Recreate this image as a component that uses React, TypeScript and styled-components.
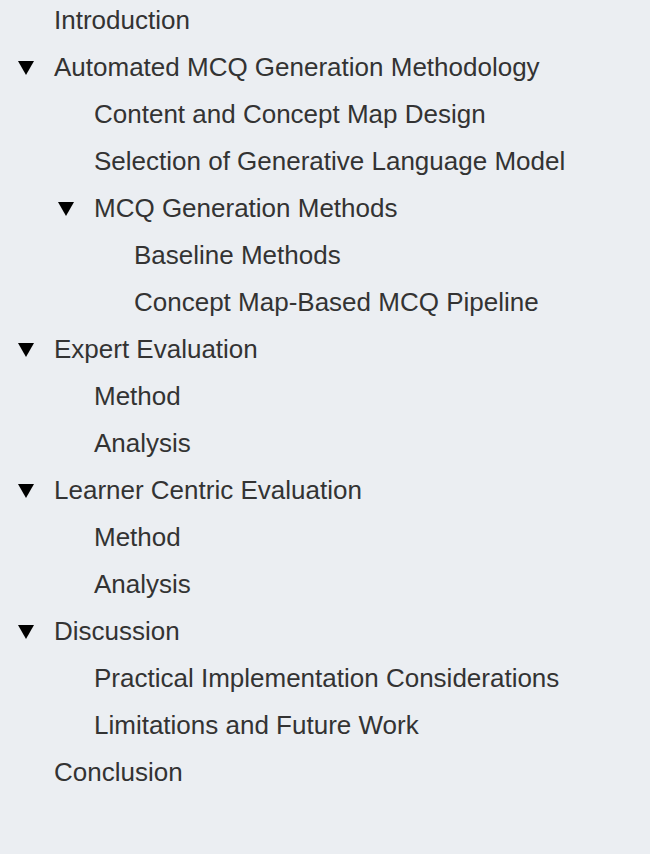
import React from "react";
import styled, { createGlobalStyle } from "styled-components";

const Global = createGlobalStyle`
  html, body { margin: 0; padding: 0; background: #ebeef2; }
  body { font-family: "Liberation Sans", Arial, sans-serif; }
`;

type Node = { title: string; children?: Node[] };

const toc: Node[] = [
  { title: "Introduction" },
  {
    title: "Automated MCQ Generation Methodology",
    children: [
      { title: "Content and Concept Map Design" },
      { title: "Selection of Generative Language Model" },
      {
        title: "MCQ Generation Methods",
        children: [
          { title: "Baseline Methods" },
          { title: "Concept Map-Based MCQ Pipeline" },
        ],
      },
    ],
  },
  {
    title: "Expert Evaluation",
    children: [{ title: "Method" }, { title: "Analysis" }],
  },
  {
    title: "Learner Centric Evaluation",
    children: [{ title: "Method" }, { title: "Analysis" }],
  },
  {
    title: "Discussion",
    children: [
      { title: "Practical Implementation Considerations" },
      { title: "Limitations and Future Work" },
    ],
  },
  { title: "Conclusion" },
];

const Page = styled.div`
  min-height: 854px;
  background: #ebeef2;
`;

const List = styled.ul`
  list-style: none;
  margin: -3px 0 0 0;
  padding: 0 0 0 18px;
`;

const SubList = styled.ul`
  list-style: none;
  margin: 0;
  padding: 0 0 0 40px;
`;

const Row = styled.div`
  display: flex;
  align-items: center;
  height: 47px;
  color: #333333;
  font-size: 26px;
  line-height: 47px;
  white-space: nowrap;
`;

const Marker = styled.span`
  display: inline-flex;
  width: 36px;
  flex: 0 0 36px;
  align-items: center;
`;

const Triangle = () => (
  <svg width="16" height="14" viewBox="0 0 16 14">
    <polygon points="0,0 16,0 8,14" fill="#000" />
  </svg>
);

const Item: React.FC<{ node: Node }> = ({ node }) => (
  <li>
    <Row>
      <Marker>{node.children ? <Triangle /> : null}</Marker>
      <span>{node.title}</span>
    </Row>
    {node.children && (
      <SubList>
        {node.children.map((c, i) => (
          <Item key={i} node={c} />
        ))}
      </SubList>
    )}
  </li>
);

export default function App() {
  return (
    <Page>
      <Global />
      <List>
        {toc.map((n, i) => (
          <Item key={i} node={n} />
        ))}
      </List>
    </Page>
  );
}
